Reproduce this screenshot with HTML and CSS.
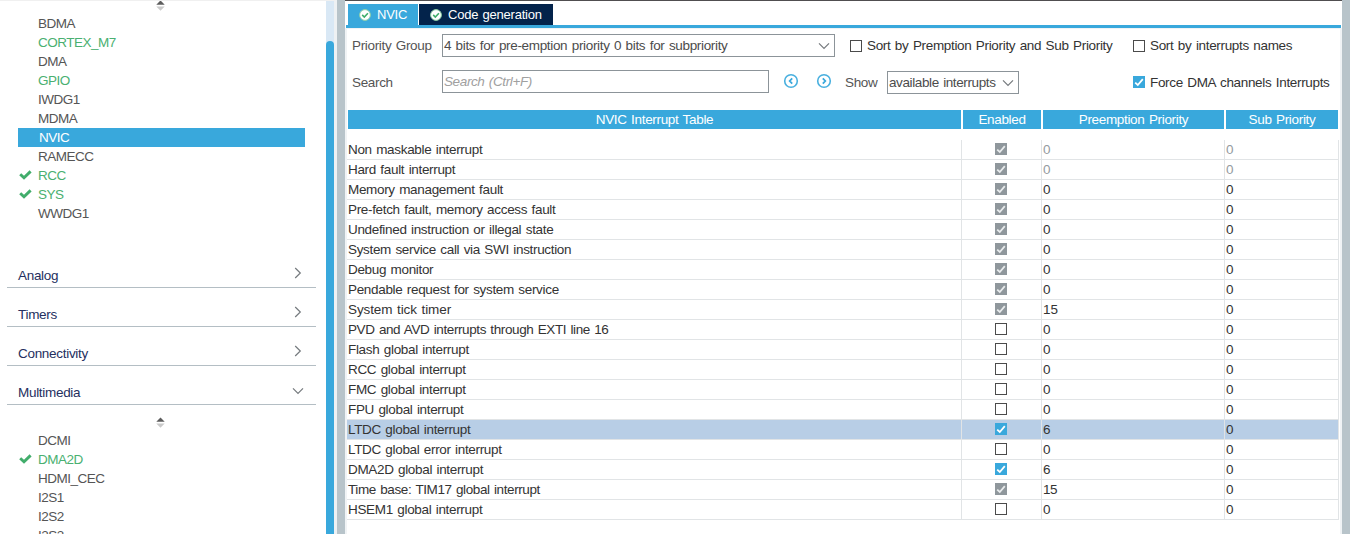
FILE: index.html
```html
<!DOCTYPE html>
<html lang="en">
<head>
<meta charset="utf-8">
<title>NVIC configuration</title>
<link rel="stylesheet" href="styles.css">
</head>
<body>
<svg class="defs" width="0" height="0">
  <symbol id="tick" viewBox="0 0 12 12"><path d="M2.2 6.6 4.8 9 9.8 3.2" fill="none" stroke="currentColor" stroke-width="1.8"/></symbol>
  <symbol id="mark" viewBox="0 0 13 10"><path d="M1.2 4.2 5 7.8 11.6 1.4" fill="none" stroke="#41ad6b" stroke-width="2.9"/></symbol>
  <symbol id="sorter" viewBox="0 0 9 11"><path d="M4.5 .4 8.7 4.8H.3z" fill="#5c5c5c"/><path d="M.3 6.6H8.7L4.5 10.8z" fill="#cacaca"/></symbol>
  <symbol id="down" viewBox="0 0 12 8"><path d="M1 1.3 6 6.3 11 1.3" fill="none" stroke="#757a7e" stroke-width="1.2"/></symbol>
  <symbol id="right" viewBox="0 0 8 12"><path d="M1.2 1 6.3 6 1.2 11" fill="none" stroke="#757a7e" stroke-width="1.2"/></symbol>
  <symbol id="ok" viewBox="0 0 12 12"><circle cx="6" cy="6" r="5.4" fill="#fff" stroke="#8fd0a6" stroke-width="1"/><path d="M3.2 5.9 5.3 8 8.9 4.2" fill="none" stroke="#3fae6a" stroke-width="1.6"/></symbol>
  <symbol id="prev" viewBox="0 0 16 16"><circle cx="8" cy="8" r="6.3" fill="none" stroke="#49b0df" stroke-width="1.6"/><path d="M9.2 5.4 6.7 8l2.5 2.6" fill="none" stroke="#3aa8dc" stroke-width="1.8"/></symbol>
  <symbol id="next" viewBox="0 0 16 16"><circle cx="8" cy="8" r="6.3" fill="none" stroke="#49b0df" stroke-width="1.6"/><path d="M6.8 5.4 9.3 8l-2.5 2.6" fill="none" stroke="#3aa8dc" stroke-width="1.8"/></symbol>
</svg>
<div class="app">
  <aside class="sidebar">
    <div class="tree">
      <svg class="sorter" width="9" height="11"><use href="#sorter"/></svg>
      <ul class="list">
        <li>BDMA</li>
        <li class="on">CORTEX_M7</li>
        <li>DMA</li>
        <li class="on">GPIO</li>
        <li>IWDG1</li>
        <li>MDMA</li>
        <li class="current">NVIC</li>
        <li>RAMECC</li>
        <li class="on"><svg width="13" height="10"><use href="#mark"/></svg>RCC</li>
        <li class="on"><svg width="13" height="10"><use href="#mark"/></svg>SYS</li>
        <li>WWDG1</li>
      </ul>
      <div class="group first"><span>Analog</span><svg width="8" height="12"><use href="#right"/></svg></div>
      <div class="group"><span>Timers</span><svg width="8" height="12"><use href="#right"/></svg></div>
      <div class="group"><span>Connectivity</span><svg width="8" height="12"><use href="#right"/></svg></div>
      <div class="group open"><span>Multimedia</span><svg width="12" height="8"><use href="#down"/></svg></div>
      <svg class="sorter second" width="9" height="11"><use href="#sorter"/></svg>
      <ul class="list lower">
        <li>DCMI</li>
        <li class="on"><svg width="13" height="10"><use href="#mark"/></svg>DMA2D</li>
        <li>HDMI_CEC</li>
        <li>I2S1</li>
        <li>I2S2</li>
        <li>I2S3</li>
      </ul>
    </div>
    <div class="scrollbar"><div class="thumb"></div></div>
  </aside>
  <div class="divider"></div>
  <main class="panel">
    <nav class="tabs">
      <div class="tab active"><svg width="12" height="12"><use href="#ok"/></svg><span>NVIC</span></div>
      <div class="tab"><svg width="12" height="12"><use href="#ok"/></svg><span>Code generation</span></div>
    </nav>
    <div class="content">
      <div class="bar">
        <span class="caption">Priority Group</span>
        <div class="field group-select"><span>4 bits for pre-emption priority 0 bits for subpriority</span><svg width="12" height="8"><use href="#down"/></svg></div>
        <label class="check sort"><i class="box"></i><span>Sort by Premption Priority and Sub Priority</span></label>
        <label class="check names"><i class="box"></i><span>Sort by interrupts names</span></label>
      </div>
      <div class="bar search-bar">
        <span class="caption">Search</span>
        <div class="field search"><span>Search (Ctrl+F)</span></div>
        <svg class="nav" width="16" height="16"><use href="#prev"/></svg>
        <svg class="nav" width="16" height="16"><use href="#next"/></svg>
        <span class="show">Show</span>
        <div class="field filter"><span>available interrupts</span><svg width="12" height="8"><use href="#down"/></svg></div>
        <label class="check force"><i class="box blue"><svg width="12" height="12"><use href="#tick"/></svg></i><span>Force DMA channels Interrupts</span></label>
      </div>
      <div class="head"><div>NVIC Interrupt Table</div><div>Enabled</div><div>Preemption Priority</div><div>Sub Priority</div></div>
      <div class="rows">
        <div class="row dim"><div>Non maskable interrupt</div><div><i class="box gray"><svg width="12" height="12"><use href="#tick"/></svg></i></div><div>0</div><div>0</div></div>
        <div class="row dim"><div>Hard fault interrupt</div><div><i class="box gray"><svg width="12" height="12"><use href="#tick"/></svg></i></div><div>0</div><div>0</div></div>
        <div class="row"><div>Memory management fault</div><div><i class="box gray"><svg width="12" height="12"><use href="#tick"/></svg></i></div><div>0</div><div>0</div></div>
        <div class="row"><div>Pre-fetch fault, memory access fault</div><div><i class="box gray"><svg width="12" height="12"><use href="#tick"/></svg></i></div><div>0</div><div>0</div></div>
        <div class="row"><div>Undefined instruction or illegal state</div><div><i class="box gray"><svg width="12" height="12"><use href="#tick"/></svg></i></div><div>0</div><div>0</div></div>
        <div class="row"><div>System service call via SWI instruction</div><div><i class="box gray"><svg width="12" height="12"><use href="#tick"/></svg></i></div><div>0</div><div>0</div></div>
        <div class="row"><div>Debug monitor</div><div><i class="box gray"><svg width="12" height="12"><use href="#tick"/></svg></i></div><div>0</div><div>0</div></div>
        <div class="row"><div>Pendable request for system service</div><div><i class="box gray"><svg width="12" height="12"><use href="#tick"/></svg></i></div><div>0</div><div>0</div></div>
        <div class="row loose"><div>System tick timer</div><div><i class="box gray"><svg width="12" height="12"><use href="#tick"/></svg></i></div><div>15</div><div>0</div></div>
        <div class="row tight"><div>PVD and AVD interrupts through EXTI line 16</div><div><i class="box"></i></div><div>0</div><div>0</div></div>
        <div class="row"><div>Flash global interrupt</div><div><i class="box"></i></div><div>0</div><div>0</div></div>
        <div class="row"><div>RCC global interrupt</div><div><i class="box"></i></div><div>0</div><div>0</div></div>
        <div class="row"><div>FMC global interrupt</div><div><i class="box"></i></div><div>0</div><div>0</div></div>
        <div class="row"><div>FPU global interrupt</div><div><i class="box"></i></div><div>0</div><div>0</div></div>
        <div class="row selected"><div>LTDC global interrupt</div><div><i class="box blue"><svg width="12" height="12"><use href="#tick"/></svg></i></div><div>6</div><div>0</div></div>
        <div class="row"><div>LTDC global error interrupt</div><div><i class="box"></i></div><div>0</div><div>0</div></div>
        <div class="row"><div>DMA2D global interrupt</div><div><i class="box blue"><svg width="12" height="12"><use href="#tick"/></svg></i></div><div>6</div><div>0</div></div>
        <div class="row tight"><div>Time base: TIM17 global interrupt</div><div><i class="box gray"><svg width="12" height="12"><use href="#tick"/></svg></i></div><div>15</div><div>0</div></div>
        <div class="row"><div>HSEM1 global interrupt</div><div><i class="box"></i></div><div>0</div><div>0</div></div>
      </div>
    </div>
  </main>
  <div class="divider"></div>
</div>
</body>
</html>
```
FILE: styles.css
```css
* { box-sizing: border-box; }
body {
  margin: 0;
  background: #fff;
  font: 13.5px/19px "Liberation Sans", Arial, sans-serif;
  letter-spacing: -0.33px;
  word-spacing: 1px;
  color: #333;
  overflow: hidden;
}
svg { display: block; flex: none; }
.defs { position: absolute; }
.app { display: flex; width: 1350px; height: 534px; overflow: hidden; }
.divider { width: 8px; background: #b8c4ca; flex: none; }

/* sidebar */
.sidebar {
  width: 337px;
  flex: none;
  display: flex;
  border-top: 1px solid #f0f0f0;
  border-right: 3px solid #eef1f3;
}
.tree { width: 326px; height: 533px; overflow: hidden; }
.sorter { margin: -1px 0 0 156px; }
.sorter.second { margin: 12px 0 0 156px; }
.list { list-style: none; margin: 3px 0 0 18px; padding: 0; width: 287px; letter-spacing: -0.5px; color: #555; }
.list.lower { margin-top: 3px; }
.list li { height: 19px; padding-left: 20px; display: flex; align-items: center; white-space: nowrap; }
.list li svg { margin: -1px 6px 0 -19px; }
.list .on { color: #4ab071; }
.list .current { background: #39a8dc; color: #fff; padding-left: 21px; }
.group {
  width: 309px;
  height: 39px;
  margin-left: 7px;
  padding: 17px 14px 0 11px;
  border-bottom: 1px solid #b4bec4;
  display: flex;
  justify-content: space-between;
  color: #252f60;
  letter-spacing: -0.3px;
}
.group.first { margin-top: 26px; }
.group svg { margin-top: 1px; }
.group.open { padding-right: 12px; }
.group.open svg { margin-top: 4px; }
.scrollbar { width: 8px; background: #d9e8f5; padding-top: 40px; }
.thumb { height: 500px; border-radius: 4px 4px 0 0; background: #39a8dc; }

/* configuration panel */
.panel { width: 997px; flex: none; border-top: 1px solid #504e50; }
.tabs {
  display: flex;
  gap: 1px;
  margin: 0 1px;
  padding: 3px 0 0 2px;
  height: 27px;
  border-bottom: 3px solid #39a8dc;
}
.tab {
  display: flex;
  align-items: center;
  gap: 6px;
  width: 134px;
  height: 21px;
  padding-left: 11px;
  background: #03234b;
  color: #fff;
  font-size: 13px;
  letter-spacing: -0.23px;
  white-space: nowrap;
}
.tab.active { width: 70px; background: #39a8dc; }
.content { height: 506px; border: solid #f0f3f5; border-width: 0 2px; border-top-width: 1px; }
.bar { display: flex; align-items: center; height: 23px; margin: 5px 0 0 5px; white-space: nowrap; }
.search-bar { margin-top: 13px; }
.bar > * { flex: none; }
.caption { width: 90px; color: #555; }
.field {
  height: 23px;
  border: 1px solid #8c9499;
  display: flex;
  align-items: center;
  justify-content: space-between;
  padding: 0 4px 0 1px;
  color: #4c4c4c;
}
.group-select { width: 393px; }
.search { width: 327px; margin-right: 14px; font-style: italic; letter-spacing: -0.38px; color: #a0a0a0; }
.nav { margin: -1px 17px 0 0; }
.show { width: 42px; margin-left: -4px; color: #555; }
.filter { width: 132px; margin-top: 2px; letter-spacing: -0.39px; }
.search-bar .caption, .search-bar .show, .force { padding-top: 2px; }
.check { display: flex; align-items: center; gap: 5px; }
.check.sort { margin-left: 15px; width: 283px; }
.check.force { margin-left: 114px; }
.force .box { margin-top: -2px; }
.box { display: block; width: 12px; height: 12px; border: 1px solid #4b4b4b; background: #fff; flex: none; }
.box.gray { border: 0; background: #8f979c; color: #e9eced; }
.box.blue { border: 0; background: #39a8dc; color: #fff; }
.head, .row { display: grid; grid-template-columns: 615px 80px 183px 114px; }
.head {
  grid-template-columns: 613px 78px 181px 112px;
  gap: 2px;
  margin: 17px 0 11px 1px;
  text-align: center;
  color: #fff;
}
.head div { height: 19px; background: #39a8dc; }
.row div { height: 20px; border: solid #e1e4e6; border-width: 0 1px 1px 0; padding-left: 1px; white-space: nowrap; }
.row div:nth-child(2) { padding: 3px 0 0 33px; }
.loose { letter-spacing: -0.1px; }
.tight { letter-spacing: -0.4px; }
.dim div:nth-child(n+3) { color: #959ba0; }
.selected div { background: #b8cee6; }
```
